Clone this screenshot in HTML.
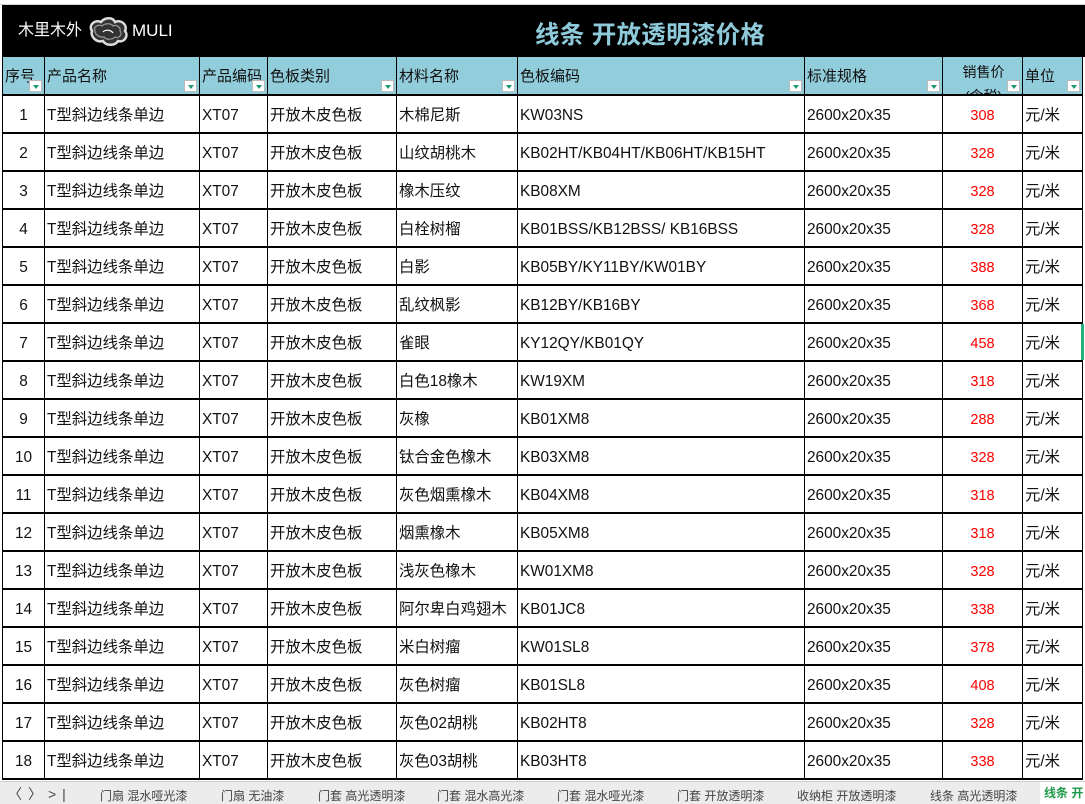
<!DOCTYPE html><html><head><meta charset="utf-8"><style>
*{margin:0;padding:0;box-sizing:border-box}
body{width:1085px;height:804px;overflow:hidden;background:#fff;position:relative;font-family:"Liberation Sans","Noto Sans CJK SC",sans-serif;}
.top{position:absolute;left:0;top:0;width:1085px;height:5px;background:#fff;border-bottom:1px solid #d4d4d4}
.title{position:absolute;left:2px;top:5px;width:1083px;height:52px;background:#000}
.title .h{position:absolute;left:533px;top:11px;font-size:24.5px;font-weight:bold;color:#8fcadb;letter-spacing:0.3px}
.logo{position:absolute;left:16px;top:15px;color:#fff;font-size:16px;line-height:22px}
.hdr{position:absolute;top:57px;height:39px;background:#92cddc;border-bottom:2px solid #000;border-right:1px solid #000;font-size:15px;color:#111;padding:2px 0 0 2px;line-height:36px;overflow:hidden}
.dd{position:absolute;right:2px;bottom:2px;width:13px;height:12px;background:#fff;border:1px solid #bbb}
.dd:after{content:"";position:absolute;left:3px;top:4px;border-left:3px solid transparent;border-right:3px solid transparent;border-top:4px solid #1f9a6a}
.c{position:absolute;height:38px;border-right:1px solid #000;border-bottom:2px solid #000;font-size:15.4px;color:#111;padding:2px 0 0 2px;line-height:36px;white-space:nowrap;overflow:hidden}
.r{color:#f00;text-align:center;padding-left:0;font-size:14.5px}
.n{text-align:center;padding-left:0}
.tabs{position:absolute;left:0;top:781px;width:1085px;height:23px;background:#ececec;border-top:1px solid #ccc;font-size:12px;color:#444}
.tabs span{position:absolute;top:5px;white-space:nowrap}
</style></head><body>
<div class="top"></div>
<div class="title">
<div class="logo"><span style="position:absolute;left:0;top:0;white-space:nowrap">木里木外</span>
<svg style="position:absolute;left:68px;top:-4px" width="46" height="30" viewBox="0 0 46 30"><path d="M6 15c-4-6 3-12 9-9 4-5 12-5 14 0 6-3 13 3 10 9 4 5-1 12-7 10-3 5-12 5-15 0-7 2-13-5-11-10z" fill="#333" stroke="#ddd" stroke-width="2.5"/><path d="M9 15c-2-4 3-7 7-5 3-3 9-3 11 0 4-2 8 2 7 5 3 3-1 8-5 6-3 3-9 3-11 0-5 1-9-3-9-6z" fill="none" stroke="#999" stroke-width="1.2"/><path d="M17 16c3-3 8-2 10 1" stroke="#fff" fill="none" stroke-width="1.2"/></svg>
<span style="position:absolute;left:114px;top:0;font-size:17px">MULI</span></div>
<div class="h">线条 开放透明漆价格</div>
</div>
<div id="g"></div>
<div class="tabs">
<span style="left:8px;font-size:14px;top:2px;letter-spacing:6px">〈〉&gt;|</span>
<span style="left:100px">门扇 混水哑光漆</span><span style="left:221px">门扇 无油漆</span><span style="left:318px">门套 高光透明漆</span><span style="left:437px">门套 混水高光漆</span><span style="left:557px">门套 混水哑光漆</span><span style="left:677px">门套 开放透明漆</span><span style="left:797px">收纳柜 开放透明漆</span><span style="left:930px">线条 高光透明漆</span><span style="left:1040px;color:#1f9a4a;font-weight:bold;background:#fff;padding:0 4px;top:0;height:22px;line-height:22px">线条 开</span>
</div>
<script>
var X=[2,45,200,268,397,518,805,943,1023,1083];
var H=["序号","产品名称","产品编码","色板类别","材料名称","色板编码","标准规格","销售价<br>(含税)","单位"];
var g=document.getElementById('g'),s='';
for(var i=0;i<9;i++){s+='<div class="hdr" style="left:'+X[i]+'px;width:'+(X[i+1]-X[i])+'px;'+(i==0?'border-left:1px solid #000;':'')+(i==7?'text-align:center;padding-top:3px;line-height:24px;font-size:14px;':'')+'">'+H[i]+'<div class="dd"></div></div>';}
var M=["木棉尼斯","山纹胡桃木","橡木压纹","白栓树榴","白影","乱纹枫影","雀眼","白色18橡木","灰橡","钛合金色橡木","灰色烟熏橡木","烟熏橡木","浅灰色橡木","阿尔卑白鸡翅木","米白树瘤","灰色树瘤","灰色02胡桃","灰色03胡桃"];
var K=["KW03NS","KB02HT/KB04HT/KB06HT/KB15HT","KB08XM","KB01BSS/KB12BSS/ KB16BSS","KB05BY/KY11BY/KW01BY","KB12BY/KB16BY","KY12QY/KB01QY","KW19XM","KB01XM8","KB03XM8","KB04XM8","KB05XM8","KW01XM8","KB01JC8","KW01SL8","KB01SL8","KB02HT8","KB03HT8"];
var P=[308,328,328,328,388,368,458,318,288,328,318,318,328,338,378,408,328,338];
for(var r=0;r<18;r++){var y=96+r*38;var v=[r+1,"T型斜边线条单边","XT07","开放木皮色板",M[r],K[r],"2600x20x35",P[r],"元/米"];
for(var i=0;i<9;i++){var cl='c'+(i==0?' n':'')+(i==7?' r':'');s+='<div class="'+cl+'" style="left:'+X[i]+'px;top:'+y+'px;width:'+(X[i+1]-X[i])+'px;'+(i==0?'border-left:1px solid #000;':'')+'">'+v[i]+'</div>';}}
s+='<div style="position:absolute;left:1081px;top:324px;width:3px;height:36px;background:#21b27a"></div>';
g.innerHTML=s;
</script>
</body></html>
